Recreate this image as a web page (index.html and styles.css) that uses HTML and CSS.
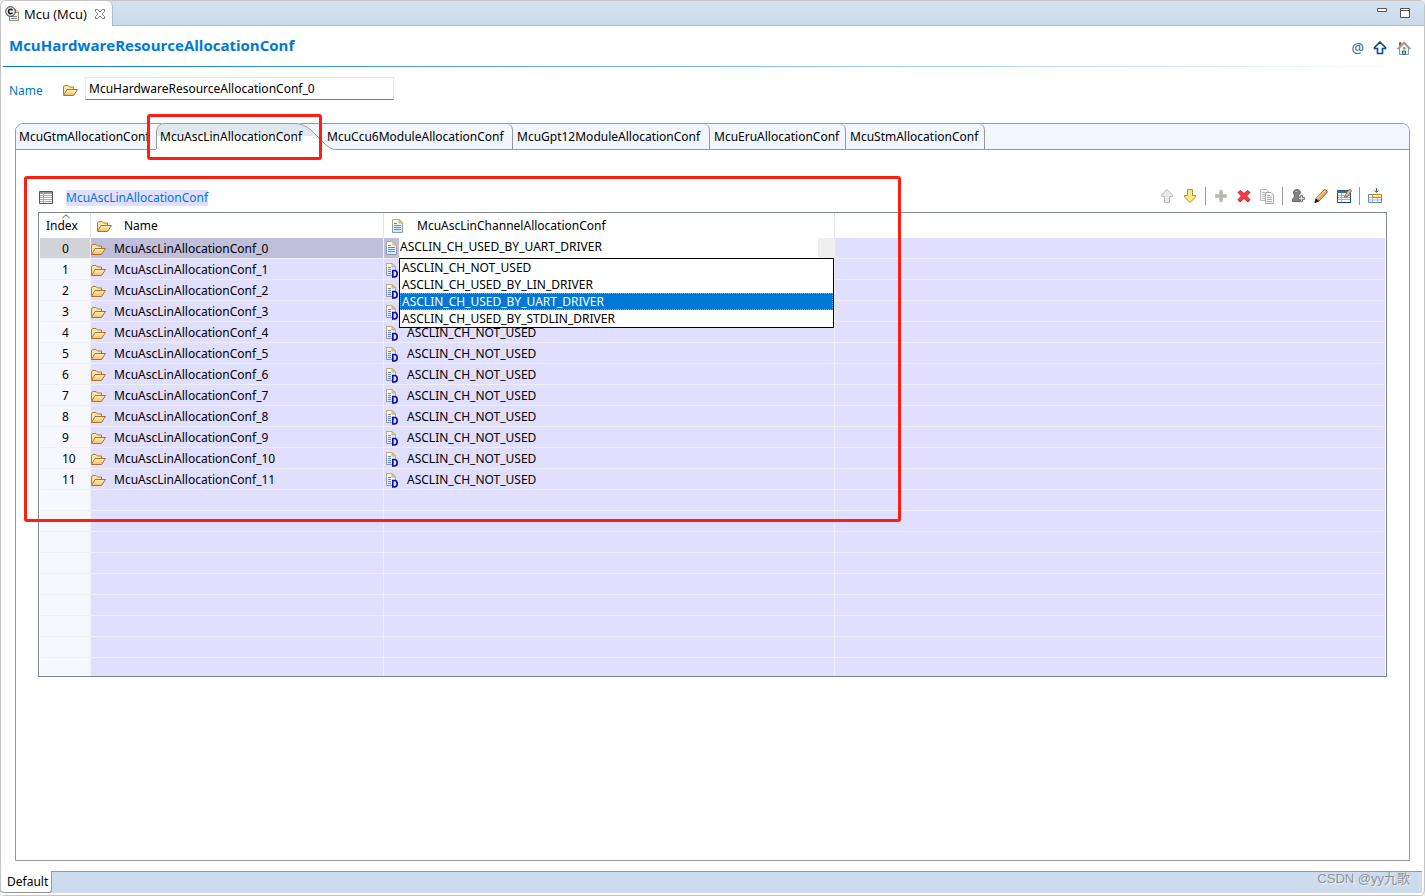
FILE: index.html
```html
<!DOCTYPE html>
<html lang="en">
<head>
<meta charset="utf-8">
<title>Mcu (Mcu)</title>
<link rel="stylesheet" href="styles.css">
</head>
<body>
<svg class="defs" aria-hidden="true">
  <defs>
    <linearGradient id="gold" x1="0" y1="0" x2="0" y2="1"><stop offset="0" stop-color="#fff3c4"/><stop offset="1" stop-color="#f3bf62"/></linearGradient>
    <linearGradient id="pale" x1="0" y1="0" x2="0" y2="1"><stop offset="0" stop-color="#fbfdff"/><stop offset="1" stop-color="#d3e5f7"/></linearGradient>
    <symbol id="folder" viewBox="0 0 16 16">
      <path d="M.5 12.500V4.500L2 3.500H5L6.500 5H10.500V7.500" fill="#fbe6ad" stroke="#b57a2c"/>
      <path d="M.5 13.500L4 7.500H14.500L10.500 13.500Z" fill="url(#gold)" stroke="#b0702a" stroke-linejoin="round"/>
    </symbol>
    <symbol id="doc" viewBox="0 0 13 16">
      <path d="M1.500 1.500H8L11.500 5V14.500H1.500Z" fill="url(#pale)" stroke="#8c9bb4"/>
      <path d="M1.500 6V1.500H8L11.500 5V7" fill="none" stroke="#bfae77"/>
      <path d="M8 1.500V5H11.500Z" fill="#ecd489" stroke="#c9b069"/>
      <path d="M3 5.500H6M3 7.500H10M3 9.500H10M3 11.500H10" stroke="#7089b5"/>
    </symbol>
    <symbol id="docd" viewBox="0 0 13 16">
      <path d="M1.500 1.500H7L10.500 5V13.500H1.500Z" fill="url(#pale)" stroke="#8c9bb4"/>
      <path d="M1.500 6V1.500H7L10.500 5V7" fill="none" stroke="#bfae77"/>
      <path d="M7 1.500V5H10.500Z" fill="#ecd489" stroke="#c9b069"/>
      <path d="M3 5.500H6M3 7.500H6M3 9.500H6M3 11.500H6" stroke="#7089b5"/>
      <path d="M7.800 8.500H9.300Q12.200 8.500 12.200 11.700T9.300 15H7.800Z" fill="#dfe8ff" stroke="#0a0ab4" stroke-width="1.600"/>
    </symbol>
  </defs>
</svg>
<div class="window">
  <header class="titlebar">
    <div class="editor-tab">
      <svg class="mcu-icon" viewBox="0 0 16 16" width="16" height="16">
        <path d="M4.500 3.500H11L13.500 6V14.500H4.500Z" fill="#eef4fb" stroke="#a08c50"/>
        <path d="M10.500 3.500V6.500H13.500" fill="#ecd489" stroke="#b09850"/>
        <path d="M6 10.500H12M6 12.500H12" stroke="#7089b5"/>
        <circle cx="5.500" cy="5.500" r="4.800" fill="#e9e9e9" stroke="#333"/>
        <path d="M7.500 4.300Q6.800 3.300 5.500 3.300Q3.600 3.300 3.600 5.500T5.500 7.700Q6.800 7.700 7.500 6.700" fill="none" stroke="#111" stroke-width="1.400"/>
      </svg>
      <span>Mcu (Mcu)</span>
      <button class="icon-btn" aria-label="Close"><svg viewBox="0 0 12 12" width="12" height="12"><path d="M1.500 1.500H3.500L6 4L8.500 1.500H10.500V3.500L8 6L10.500 8.500V10.500H8.500L6 8L3.500 10.500H1.500V8.500L4 6L1.500 3.500Z" fill="#fff" stroke="#777"/></svg></button>
    </div>
    <div class="window-btns">
      <button class="icon-btn" aria-label="Minimize"><svg viewBox="0 0 11 12" width="11" height="12"><path d="M.5 1.500H9.500V4.500H.5Z" fill="#fff" stroke="#555"/></svg></button>
      <button class="icon-btn" aria-label="Maximize"><svg viewBox="0 0 11 12" width="11" height="12"><path d="M.5 1.500H9.500V10.500H.5ZM.5 3.500H9.500" fill="#fff" stroke="#555"/></svg></button>
    </div>
  </header>

  <div class="heading">
    <h1>McuHardwareResourceAllocationConf</h1>
    <div class="heading-btns">
      <button class="icon-btn at" aria-label="Attributes">@</button>
      <button class="icon-btn" aria-label="Up"><svg viewBox="0 0 16 16" width="16" height="16"><path d="M8 2L13.500 7.500V8.500H10.500V13.500H5.500V8.500H2.500V7.500Z" fill="#fff" stroke="#0b4a96" stroke-width="1.600"/></svg></button>
      <button class="icon-btn" aria-label="Home"><svg viewBox="0 0 16 16" width="16" height="16">
        <path d="M3.500 2.500H5V6H3.500Z" fill="#b0523a" stroke="#a0604c"/>
        <path d="M3.500 8L8 3.500L12.500 8V14.500H3.500Z" fill="#e6f2fa" stroke="#7f9cbd"/>
        <path d="M1.500 9L8 2.500L14.500 9" fill="none" stroke="#b3946a" stroke-width="1.600"/>
        <path d="M7.500 7.500H9V9H7.500Z" fill="#9ac43c" stroke="#7ea63c"/>
        <path d="M6.500 11H9.500V14.500H6.500Z" fill="#b9d65a" stroke="#3464a8"/>
      </svg></button>
    </div>
  </div>
  <div class="rule"></div>

  <main class="content">
    <div class="name-row">
      <label for="conf-name">Name</label>
      <svg width="16" height="16"><use href="#folder"/></svg>
      <input id="conf-name" type="text" value="McuHardwareResourceAllocationConf_0">
    </div>

    <div class="folder">
      <nav class="tabs" role="tablist">
        <button role="tab" class="tab tab-gtm">McuGtmAllocationConf</button>
        <button role="tab" class="tab tab-active" aria-selected="true">
          <svg class="tab-shape" viewBox="0 0 180 27" width="180" height="27" aria-hidden="true">
            <path d="M0 27V8Q1 0 9 0H140Q149 0 156 7L169 20Q175 26 180 26V27Z" fill="#fff"/>
            <path d="M1 13V8Q2 1 9 1H140Q148 1 155 7L161 13Z" fill="#dfe7f0"/>
            <path d="M.5 26V8Q1.500 .5 9 .5H138Q148 .5 155 7L168 20Q174 26.500 180 26.500" fill="none" stroke="#999"/>
          </svg>
          <span>McuAscLinAllocationConf</span>
          <i class="mark mark-tab"></i>
        </button>
        <button role="tab" class="tab tab-ccu">McuCcu6ModuleAllocationConf</button>
        <button role="tab" class="tab tab-gpt">McuGpt12ModuleAllocationConf</button>
        <button role="tab" class="tab tab-eru">McuEruAllocationConf</button>
        <button role="tab" class="tab tab-stm">McuStmAllocationConf</button>
      </nav>

      <section class="panel">
        <i class="mark mark-panel"></i>
        <div class="panel-head">
          <svg viewBox="0 0 15 14" width="15" height="14"><path d="M.5 .5H13.500V12.500H.5Z" fill="#fff" stroke="#555"/><path d="M1 2H13" stroke="#999" stroke-width="2"/><path d="M1 4.500H13M1 6.500H13M1 8.500H13M1 10.500H13M4.500 1V12" stroke="#aaa"/></svg>
          <h2>McuAscLinAllocationConf</h2>
          <div class="toolbar">
            <button class="icon-btn" aria-label="Move up"><svg viewBox="0 0 16 16" width="16" height="16"><path d="M8 1.500L13.500 7V8.500H10.500V14.500H5.500V8.500H2.500V7Z" fill="#e9e9e6" stroke="#b8b8b4"/></svg></button>
            <button class="icon-btn" aria-label="Move down"><svg viewBox="0 0 16 16" width="16" height="16"><path d="M8 14.500L13.500 9V7.500H10.500V1.500H5.500V7.500H2.500V9Z" fill="#ffe88a" stroke="#c08a1c"/></svg></button>
            <span class="sep"></span>
            <button class="icon-btn" aria-label="Add"><svg viewBox="0 0 16 16" width="16" height="16"><path d="M6.500 2.500H9.500V6.500H13.500V9.500H9.500V13.500H6.500V9.500H2.500V6.500H6.500Z" fill="#b4b7ad" stroke="#c8cac2"/></svg></button>
            <button class="icon-btn" aria-label="Delete"><svg viewBox="0 0 16 16" width="16" height="16"><path d="M2 4.500L4.500 2.500L8 5.500L11.500 2.500L14 4.500L10.500 8L14 11.500L12 14L8 10.500L4 14L2 11.500L5.500 8Z" fill="#ef3d49" stroke="#c4202f"/></svg></button>
            <button class="icon-btn" aria-label="Copy"><svg viewBox="0 0 16 16" width="16" height="16"><path d="M1.500 1.500H7.500L9.500 3.500V12.500H1.500Z" fill="#f3f3f3" stroke="#bbb"/><path d="M3 4.500H6M3 6.500H6M3 8.500H6M3 10.500H6" stroke="#bbb"/><path d="M6.500 4.500H12L14.500 7V15.500H6.500Z" fill="#f6f6f6" stroke="#aaa"/><path d="M8 7.500H11M8 9.500H13M8 11.500H13M8 13.500H13" stroke="#aaa"/></svg></button>
            <span class="sep"></span>
            <button class="icon-btn" aria-label="Add element"><svg viewBox="0 0 16 16" width="16" height="16"><path d="M4.500 7Q3 6 3.500 3.500Q4.500 1.500 7 1.500T10.500 4Q10.500 6 8.500 7Q8.500 9 10 10.500V13.500H2.500V11Q4.500 10 4.500 7Z" fill="#828282" stroke="#666"/><path d="M5.500 3.500H7" stroke="#ccc"/><path d="M10.500 7.500H12.500V9.500H14.500V11.500H12.500V13.500H10.500V11.500H8.500V9.500H10.500Z" fill="#ddd" stroke="#777"/></svg></button>
            <button class="icon-btn" aria-label="Edit"><svg viewBox="0 0 16 16" width="16" height="16"><path d="M2 14.500L3 10.500L11.500 1.500Q13.500 1.500 14.500 4L6 13Z" fill="#f2a85a" stroke="#a8632a"/><path d="M4.500 10L12 2.500" stroke="#ffe3bd"/><path d="M2 14.500L3 11L5.500 13Z" fill="#113" stroke="#224"/></svg></button>
            <button class="icon-btn" aria-label="Edit table"><svg viewBox="0 0 16 16" width="16" height="16"><path d="M1.500 2.500H14.500V14.500H1.500Z" fill="#fff" stroke="#1f5590"/><path d="M1 4H11" stroke="#2f6eae" stroke-width="2"/><path d="M2 7.500H14M2 9.500H14M2 11.500H14M5.500 5V14" stroke="#8ab6dd"/><path d="M1.500 14.500H14.500" stroke="#123f75"/><path d="M8.500 9.500L9.500 6.500L13.500 1L15.500 3L11.500 8.500Z" fill="#e9b98d" stroke="#8e6347"/></svg></button>
            <span class="sep"></span>
            <button class="icon-btn" aria-label="Insert columns"><svg viewBox="0 0 16 16" width="16" height="16"><path d="M1.500 6.500H14.500V14.500H1.500Z" fill="#fff" stroke="#7188a8"/><path d="M2 9.500H14M2 12H14M5.500 7V14M10.500 7V14" stroke="#9fb9d6"/><path d="M5.500 6.500H14.500V9.500H5.500Z" fill="#ffe9a0" stroke="#c08a1c"/><path d="M9.500 0V4M7.500 2.500L9.500 4.500L11.500 2.500" fill="none" stroke="#48678c"/></svg></button>
          </div>
        </div>

        <div class="grid">
          <table>
            <colgroup><col class="c-index"><col class="c-name"><col class="c-channel"><col></colgroup>
            <thead>
              <tr>
                <th class="th-index"><svg class="caret" viewBox="0 0 8 5" width="8" height="5"><path d="M.5 4L4 .8L7.500 4" fill="none" stroke="#555"/></svg>Index</th>
                <th><span class="cell"><svg width="16" height="16"><use href="#folder"/></svg>Name</span></th>
                <th><span class="cell"><svg width="13" height="16"><use href="#doc"/></svg>McuAscLinChannelAllocationConf</span></th>
                <th></th>
              </tr>
            </thead>
            <tbody>
              <tr class="selected"><td>0</td><td><span class="cell"><svg width="16" height="16"><use href="#folder"/></svg>McuAscLinAllocationConf_0</span></td>
                <td class="editing"><svg width="13" height="16"><use href="#doc"/></svg>
                  <div class="combo">
                    <select aria-label="McuAscLinChannelAllocationConf"><option>ASCLIN_CH_USED_BY_UART_DRIVER</option></select>
                    <ul class="options" role="listbox" aria-label="Channel allocation">
                      <li role="option">ASCLIN_CH_NOT_USED</li>
                      <li role="option">ASCLIN_CH_USED_BY_LIN_DRIVER</li>
                      <li role="option" class="current" aria-selected="true">ASCLIN_CH_USED_BY_UART_DRIVER</li>
                      <li role="option">ASCLIN_CH_USED_BY_STDLIN_DRIVER</li>
                    </ul>
                  </div></td><td></td></tr>
              <tr><td>1</td><td><span class="cell"><svg width="16" height="16"><use href="#folder"/></svg>McuAscLinAllocationConf_1</span></td><td><span class="cell"><svg width="13" height="16"><use href="#docd"/></svg></span></td><td></td></tr>
              <tr><td>2</td><td><span class="cell"><svg width="16" height="16"><use href="#folder"/></svg>McuAscLinAllocationConf_2</span></td><td><span class="cell"><svg width="13" height="16"><use href="#docd"/></svg></span></td><td></td></tr>
              <tr><td>3</td><td><span class="cell"><svg width="16" height="16"><use href="#folder"/></svg>McuAscLinAllocationConf_3</span></td><td><span class="cell"><svg width="13" height="16"><use href="#docd"/></svg></span></td><td></td></tr>
              <tr><td>4</td><td><span class="cell"><svg width="16" height="16"><use href="#folder"/></svg>McuAscLinAllocationConf_4</span></td><td><span class="cell"><svg width="13" height="16"><use href="#docd"/></svg>ASCLIN_CH_NOT_USED</span></td><td></td></tr>
              <tr><td>5</td><td><span class="cell"><svg width="16" height="16"><use href="#folder"/></svg>McuAscLinAllocationConf_5</span></td><td><span class="cell"><svg width="13" height="16"><use href="#docd"/></svg>ASCLIN_CH_NOT_USED</span></td><td></td></tr>
              <tr><td>6</td><td><span class="cell"><svg width="16" height="16"><use href="#folder"/></svg>McuAscLinAllocationConf_6</span></td><td><span class="cell"><svg width="13" height="16"><use href="#docd"/></svg>ASCLIN_CH_NOT_USED</span></td><td></td></tr>
              <tr><td>7</td><td><span class="cell"><svg width="16" height="16"><use href="#folder"/></svg>McuAscLinAllocationConf_7</span></td><td><span class="cell"><svg width="13" height="16"><use href="#docd"/></svg>ASCLIN_CH_NOT_USED</span></td><td></td></tr>
              <tr><td>8</td><td><span class="cell"><svg width="16" height="16"><use href="#folder"/></svg>McuAscLinAllocationConf_8</span></td><td><span class="cell"><svg width="13" height="16"><use href="#docd"/></svg>ASCLIN_CH_NOT_USED</span></td><td></td></tr>
              <tr><td>9</td><td><span class="cell"><svg width="16" height="16"><use href="#folder"/></svg>McuAscLinAllocationConf_9</span></td><td><span class="cell"><svg width="13" height="16"><use href="#docd"/></svg>ASCLIN_CH_NOT_USED</span></td><td></td></tr>
              <tr><td>10</td><td><span class="cell"><svg width="16" height="16"><use href="#folder"/></svg>McuAscLinAllocationConf_10</span></td><td><span class="cell"><svg width="13" height="16"><use href="#docd"/></svg>ASCLIN_CH_NOT_USED</span></td><td></td></tr>
              <tr><td>11</td><td><span class="cell"><svg width="16" height="16"><use href="#folder"/></svg>McuAscLinAllocationConf_11</span></td><td><span class="cell"><svg width="13" height="16"><use href="#docd"/></svg>ASCLIN_CH_NOT_USED</span></td><td></td></tr>
              <tr><td></td><td></td><td></td><td></td></tr>
              <tr><td></td><td></td><td></td><td></td></tr>
              <tr><td></td><td></td><td></td><td></td></tr>
              <tr><td></td><td></td><td></td><td></td></tr>
              <tr><td></td><td></td><td></td><td></td></tr>
              <tr><td></td><td></td><td></td><td></td></tr>
              <tr><td></td><td></td><td></td><td></td></tr>
              <tr><td></td><td></td><td></td><td></td></tr>
              <tr class="last"><td></td><td></td><td></td><td></td></tr>
            </tbody>
          </table>
        </div>
      </section>
    </div>
  </main>

  <footer class="bottom">
    <button class="page-tab">Default</button>
    <span class="credit">CSDN @yy九歌</span>
  </footer>
</div>
</body>
</html>
```
FILE: styles.css
```css
* { box-sizing: border-box; }
body {
  margin: 0;
  background: #e6ecf4;
  color: #000;
  font: 12px/16px "Noto Sans", "Noto Sans CJK SC", sans-serif;
}
svg { display: block; flex: none; }
button, input, select { font: inherit; color: inherit; border-radius: 0; }
.defs { position: absolute; width: 0; height: 0; }

.window {
  display: flex;
  flex-direction: column;
  min-height: 100vh;
  border: 1px solid #c4c4c4;
  border-radius: 6px;
  background: #fff;
}
.icon-btn { display: flex; padding: 0; border: 0; background: none; }

.titlebar {
  display: flex;
  justify-content: space-between;
  height: 25px;
  border-bottom: 1px solid #aebbd0;
  border-radius: 5px 5px 0 0;
  background: linear-gradient(#d4e2f0, #cbdbea);
}
.editor-tab {
  display: flex;
  align-items: center;
  gap: 3px;
  height: 25px;
  padding: 0 6px 0 4px;
  border-right: 1px solid #aebbd0;
  border-radius: 5px 6px 0 0;
  background: #fff;
  font-family: "Open Sans", sans-serif;
  font-size: 13px;
}
.editor-tab .icon-btn { margin-left: 4px; }
.window-btns { display: flex; gap: 12px; padding: 6px 13px 0 0; }

.heading {
  display: flex;
  justify-content: space-between;
  align-items: center;
  height: 40px;
  padding: 0 12px 0 8px;
}
h1 {
  margin: 0;
  padding-bottom: 2px;
  color: #0078d7;
  font: 700 15px/20px "Open Sans", sans-serif;
}
.heading-btns { display: flex; align-items: center; gap: 8px; padding-top: 4px; }
.at { color: #33669a; font-size: 14px; }
.rule { height: 1px; margin: 0 8px 0 2px; background: linear-gradient(90deg, #0078d7, #fff); }

.content { flex: 1; display: flex; flex-direction: column; padding: 10px 14px 10px; }
.name-row { display: flex; align-items: center; height: 23px; }
.name-row label { width: 47px; margin-left: -6px; padding-top: 4px; color: #0078d7; }
.name-row svg { margin: 3px 6px 0 7px; }
.name-row input {
  width: 309px;
  height: 23px;
  padding: 0 3px;
  border: 1px solid #e4e4e4;
  border-bottom-color: #7a7a7a;
  background: #fff;
}

.folder {
  flex: 1;
  display: flex;
  flex-direction: column;
  margin-top: 23px;
  border: 1px solid #999;
  border-radius: 8px 8px 0 0;
}
.tabs {
  display: flex;
  height: 26px;
  border-bottom: 1px solid #999;
  border-radius: 7px 7px 0 0;
  background: #f1f6ff;
}
.tab {
  flex: none;
  padding: 0 0 0 4px;
  border: 0;
  border-right: 1px solid #999;
  border-top-right-radius: 6px;
  background: none;
  text-align: left;
  white-space: nowrap;
}
.tab-gtm { width: 141px; padding-left: 3px; border-right: 0; }
.tab-active { position: relative; width: 167px; padding-left: 3px; border: 0; }
.tab-active span { position: relative; }
.tab-shape { position: absolute; left: -1px; top: -1px; }
.tab-ccu { width: 189px; padding-left: 3px; }
.tab-gpt { width: 197px; }
.tab-eru { width: 136px; }
.tab-stm { width: 139px; }

.mark { position: absolute; border: 3px solid #ff1e12; border-radius: 3px; pointer-events: none; z-index: 2; }
.mark-tab { left: -10px; top: -10px; width: 175px; height: 46px; }
.mark-panel { left: 8px; top: 26px; width: 877px; height: 346px; }

.panel { position: relative; flex: 1; padding: 32px 22px 0; }
.panel-head { display: flex; align-items: center; height: 30px; padding-bottom: 2px; }
.panel-head > svg { margin: 4px 0 0 1px; }
h2 { margin: 4px 0 0 12px; background: #e0dfff; color: #0078d7; font-size: 12px; line-height: 16px; font-weight: 400; }
.toolbar { display: flex; align-items: center; gap: 7px; margin-left: auto; padding-right: 4px; }
.sep { width: 1px; height: 18px; background: #999; }

.grid { border: 1px solid #7f858d; padding: 0 1px; }
table { width: 100%; table-layout: fixed; border-collapse: separate; border-spacing: 0; }
.c-index { width: 51px; }
.c-name { width: 293px; }
.c-channel { width: 451px; }
th { height: 25px; padding: 0; font-weight: 400; text-align: left; border-right: 1px solid #e4e4e4; }
th:last-child { border-right: 0; }
.th-index { position: relative; padding-left: 6px; }
.caret { position: absolute; left: 22px; top: 1px; }
.cell { display: flex; align-items: center; gap: 7px; height: 20px; padding-top: 1px; }
th .cell { gap: 11px; padding: 0 0 0 6px; }
th:nth-child(3) .cell { gap: 13px; padding-left: 7px; }
td { height: 21px; padding: 0; background: #e0dfff; border-right: 1px solid #efeff0; border-bottom: 1px solid #efeff0; }
td:first-child { padding: 1px 0 0 22px; background: #f7f7ff; }
td:last-child { border-right: 0; }
td:nth-child(3) { padding-left: 1px; }
td:nth-child(3) .cell { gap: 9px; }
.last td { height: 18px; border-bottom: 0; }
.selected td { background: #bfbedb; }
.selected td:first-child { background: #d2d3d8; }
.selected td:last-child { background: #e0dfff; }

.editing { display: flex; align-items: center; position: relative; }
.combo { flex: 1; margin-left: 1px; height: 20px; }
.combo select {
  display: block;
  width: 100%;
  height: 20px;
  padding: 0 0 3px 1px;
  border: 0;
  border-right: 16px solid #efefef;
  appearance: none;
  background: #fff;
}
.options {
  position: absolute;
  z-index: 1;
  left: 15px;
  right: 0;
  top: 20px;
  margin: 0;
  padding: 0;
  border: 1px solid #000;
  background: #fff;
  list-style: none;
}
.options li { height: 17px; padding: 0 1px; border: 1px solid transparent; line-height: 15px; }
.options .current { border: 1px dotted #f08a3c; background: #0078d7; color: #fff; }

.bottom { position: relative; height: 24px; margin: 0 2px 0 0; border-bottom: 2px solid #fff; background: #cddcec; border-top: 1px solid #999; }
.page-tab {
  display: block;
  height: 22px;
  margin-top: -1px;
  padding: 0 3px 0 6px;
  border: 0;
  border-right: 1px solid #999;
  border-bottom: 1px solid #999;
  border-radius: 0 0 3px 4px;
  background: #fff;
}
.credit {
  position: absolute;
  right: 12px;
  top: -1px;
  color: #8b949d;
  font: 13px/16px "Liberation Sans", "Noto Sans CJK SC", sans-serif;
  text-shadow: 1px 1px 0 #e9eff5;
}
```
